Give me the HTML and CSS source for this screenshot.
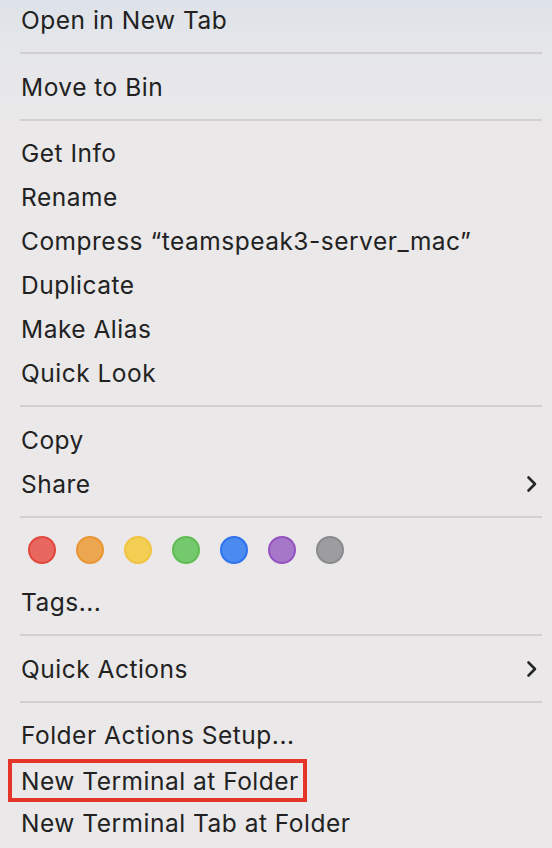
FILE: index.html
```html
<!DOCTYPE html>
<html lang="en">
<head>
  <meta charset="UTF-8">
  <meta name="viewport" content="width=device-width, initial-scale=1.0">
  <title>Context Menu</title>
  <link rel="stylesheet" href="styles.css">
</head>
<body>
  <div class="menu">
    <div class="item first">Open in New Tab</div>
    <div class="sep"></div>
    <div class="item">Move to Bin</div>
    <div class="sep"></div>
    <div class="item">Get Info</div>
    <div class="item">Rename</div>
    <div class="item">Compress “teamspeak3-server_mac”</div>
    <div class="item">Duplicate</div>
    <div class="item">Make Alias</div>
    <div class="item">Quick Look</div>
    <div class="sep"></div>
    <div class="item">Copy</div>
    <div class="item">Share
      <svg class="chev" width="12" height="18" viewBox="0 0 12 18"><path d="M2.5 2.5 L9 9 L2.5 15.5" fill="none" stroke="#262626" stroke-width="2.6" stroke-linecap="round" stroke-linejoin="round"/></svg>
    </div>
    <div class="sep"></div>
    <div class="tags">
      <span class="dot red"></span>
      <span class="dot orange"></span>
      <span class="dot yellow"></span>
      <span class="dot green"></span>
      <span class="dot blue"></span>
      <span class="dot purple"></span>
      <span class="dot gray"></span>
    </div>
    <div class="item">Tags...</div>
    <div class="sep"></div>
    <div class="item">Quick Actions
      <svg class="chev" width="12" height="18" viewBox="0 0 12 18"><path d="M2.5 2.5 L9 9 L2.5 15.5" fill="none" stroke="#262626" stroke-width="2.6" stroke-linecap="round" stroke-linejoin="round"/></svg>
    </div>
    <div class="sep"></div>
    <div class="item">Folder Actions Setup...</div>
    <div class="item"><span class="mark">New Terminal at Folder</span></div>
    <div class="item">New Terminal Tab at Folder</div>
  </div>
</body>
</html>
```

FILE: styles.css
```css
html, body { margin: 0; padding: 0; }
body {
  width: 552px; height: 848px; overflow: hidden;
  background: linear-gradient(180deg, #dee3e9 0px, #e6e7ea 60px, #eae8e9 130px, #eae8e9 100%);
  font-family: Inter, "Noto Sans", sans-serif; color: #222;
}
.menu { margin-top: -2px; }
.item {
  height: 44px; padding: 0 14px 0 21px;
  display: flex; align-items: center; justify-content: space-between;
  font-size: 24.5px; letter-spacing: 0.5px; position: relative;
}
.sep { height: 2px; background: #d1cfd1; margin: 10px 10px 10.5px 20px; }
.tags { display: flex; gap: 20px; padding: 8px 0 16px 28px; }
.dot { width: 24px; height: 24px; border-radius: 50%; border: 2px solid; }
.red { background: #e8675e; border-color: #e1473d; }
.orange { background: #eca64f; border-color: #e99533; }
.yellow { background: #f2ce53; border-color: #f0c542; }
.green { background: #73c96b; border-color: #5fbc52; }
.blue { background: #4a8af1; border-color: #2f73ee; }
.purple { background: #a676c8; border-color: #9352c1; }
.gray { background: #9d9c9f; border-color: #8b8a8d; }
.mark {
  position: absolute; left: 8px; top: 2px; width: 299px; height: 43px;
  box-sizing: border-box;
  border: 4px solid #e5352b; padding-left: 9px;
  display: flex; align-items: center;
}
```
